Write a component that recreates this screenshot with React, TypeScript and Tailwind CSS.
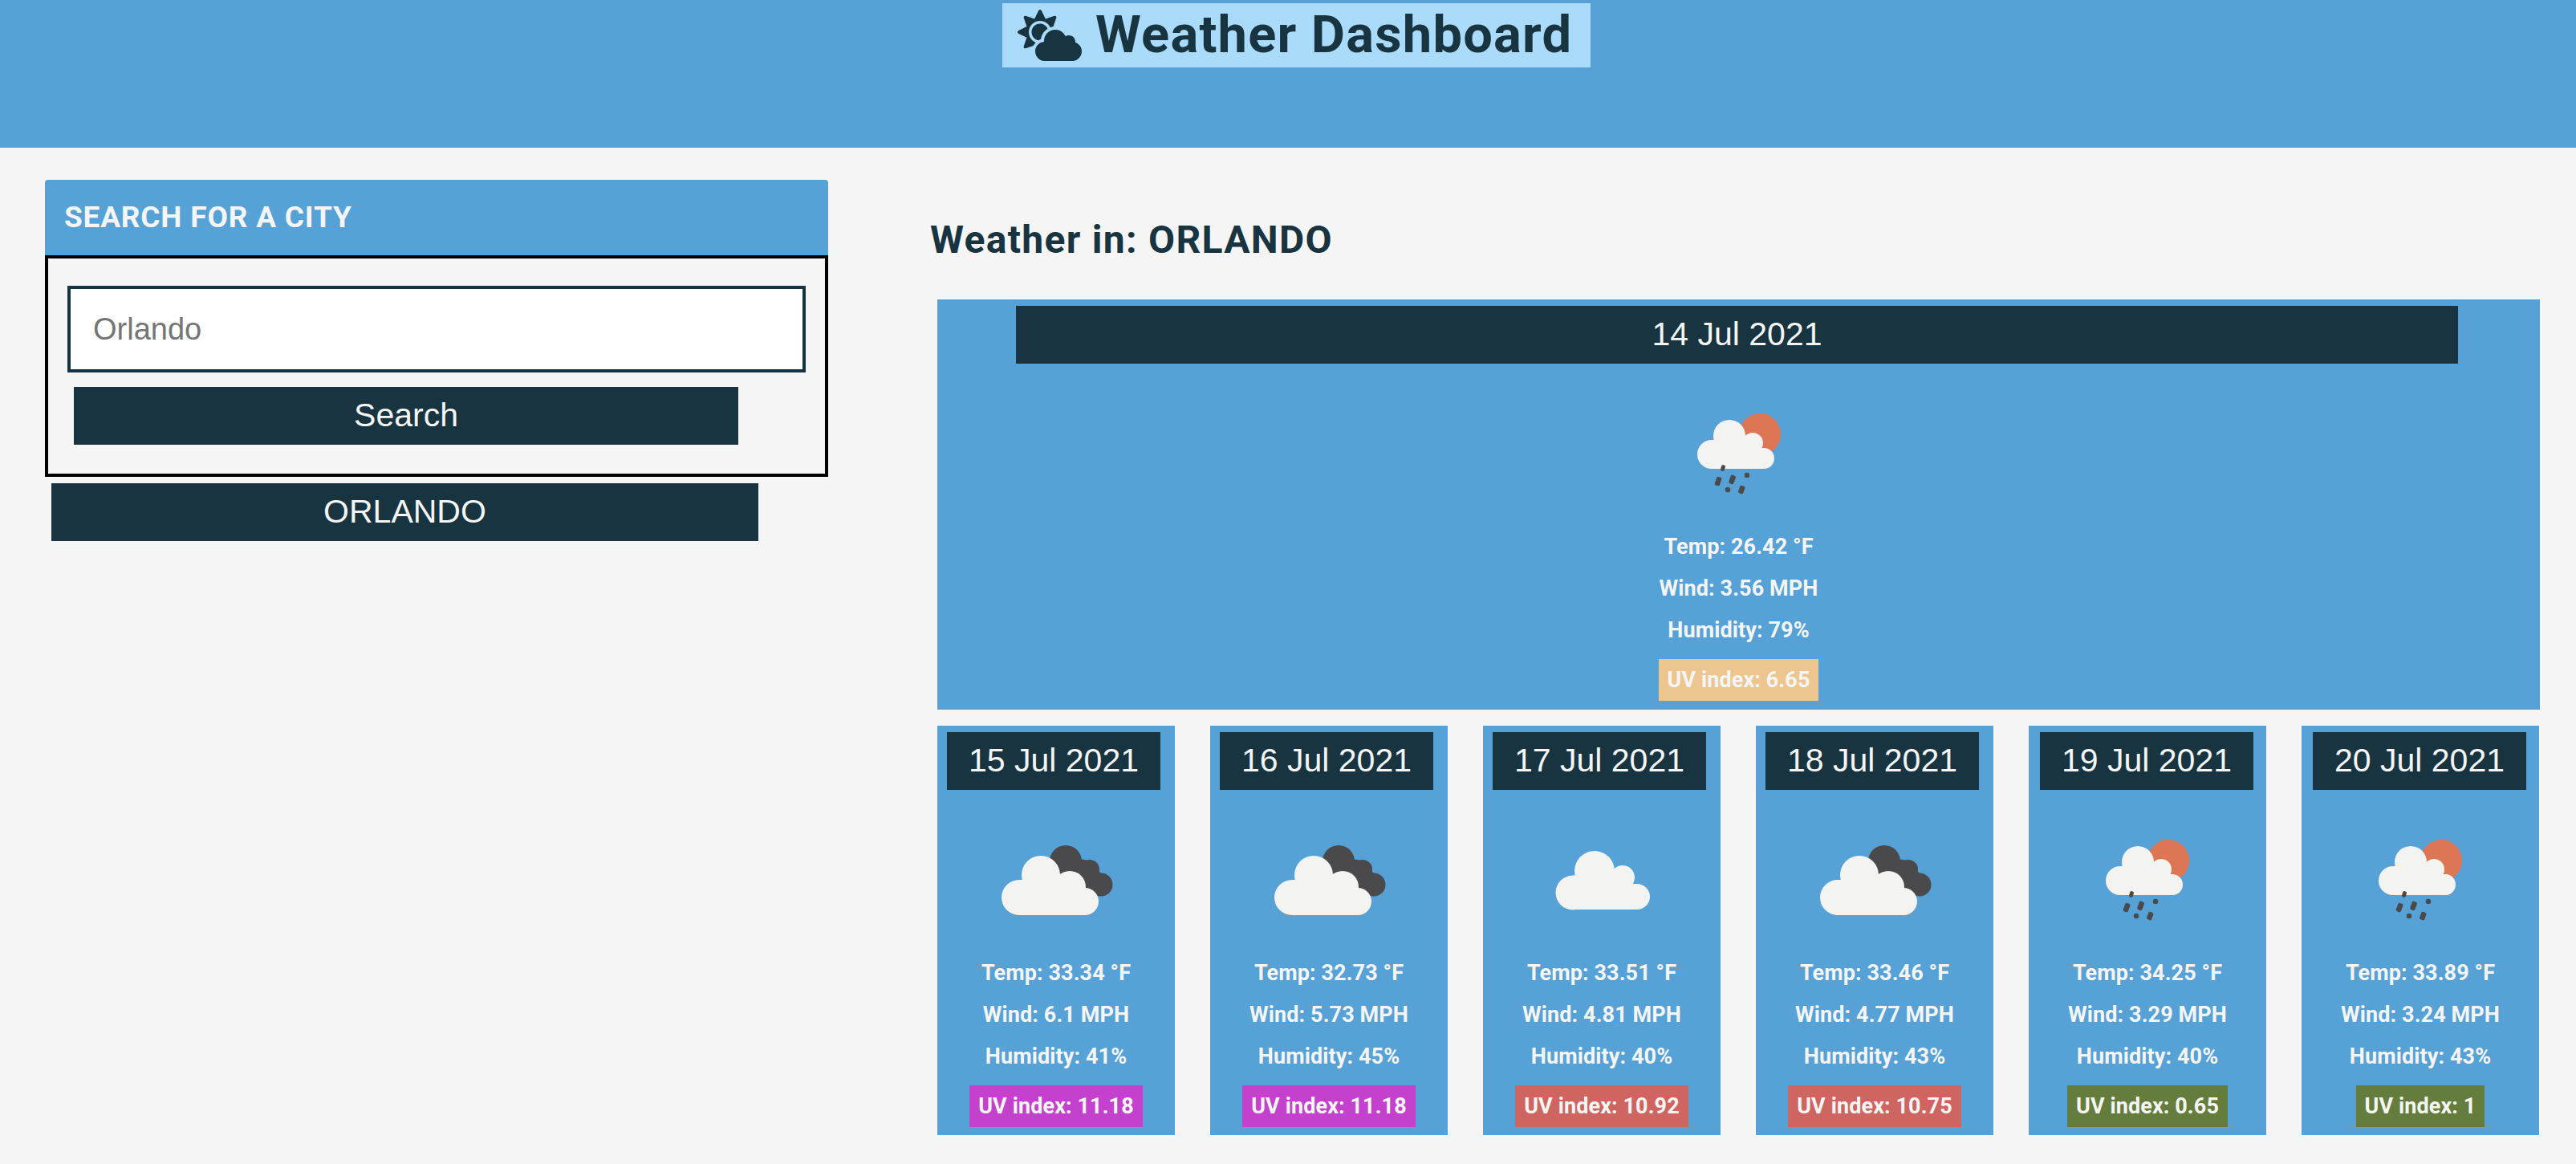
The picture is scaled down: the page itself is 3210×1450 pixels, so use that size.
import { FaCloudSun } from "react-icons/fa";

const sans = "font-['Roboto','Liberation_Sans',sans-serif]";

type Day = {
  date: string;
  temp: string;
  wind: string;
  humidity: string;
  uv: string;
  uvClass: string;
  icon: "rain" | "broken" | "cloud";
  dateClass: string;
};

const days: Day[] = [
  { date: "15 Jul 2021", temp: "33.34", wind: "6.1", humidity: "41", uv: "11.18", uvClass: "bg-[#c341cc]", icon: "broken", dateClass: "ml-[12px]" },
  { date: "16 Jul 2021", temp: "32.73", wind: "5.73", humidity: "45", uv: "11.18", uvClass: "bg-[#c341cc]", icon: "broken", dateClass: "ml-[12px]" },
  { date: "17 Jul 2021", temp: "33.51", wind: "4.81", humidity: "40", uv: "10.92", uvClass: "bg-[#cf6560]", icon: "cloud", dateClass: "ml-[12px]" },
  { date: "18 Jul 2021", temp: "33.46", wind: "4.77", humidity: "43", uv: "10.75", uvClass: "bg-[#cf6560]", icon: "broken", dateClass: "ml-[12px]" },
  { date: "19 Jul 2021", temp: "34.25", wind: "3.29", humidity: "40", uv: "0.65", uvClass: "bg-[#647d3d]", icon: "rain", dateClass: "ml-[14px]" },
  { date: "20 Jul 2021", temp: "33.89", wind: "3.24", humidity: "43", uv: "1", uvClass: "bg-[#647d3d]", icon: "rain", dateClass: "ml-[14px]" },
];

function WeatherIcon({ kind }: { kind: Day["icon"] }) {
  return (
    <svg width="200" height="190" viewBox="0 0 200 190" className="mx-auto mt-[12px] block">
      {kind === "broken" && (
        <g transform="translate(4 24)">
          <g fill="#4a4a4c">
            <circle cx="108" cy="53" r="20" />
            <circle cx="138" cy="63" r="12" />
            <circle cx="152" cy="82" r="14.5" />
            <path d="M92 45 L138 52 L152 68 L150 96 L110 96 Z" />
          </g>
          <g fill="#f3f3f1">
            <circle cx="50" cy="98" r="22" />
            <circle cx="77" cy="70" r="24" />
            <circle cx="113" cy="85" r="20" />
            <circle cx="132" cy="103" r="17" />
            <path d="M50 76 H77 V85 H132 V120 H50 Z" />
          </g>
        </g>
      )}
      {kind === "cloud" && (
        <g transform="translate(4 34)" fill="#f3f3f1">
          <circle cx="60" cy="82" r="21.5" />
          <circle cx="87" cy="55" r="25" />
          <circle cx="122" cy="63" r="15" />
          <circle cx="140" cy="87" r="16" />
          <path d="M60 60.5 H87 V63 H122 V71 H140 V103 H60 Z" />
        </g>
      )}
      {kind === "rain" && (
        <g transform="translate(24 24)">
          <circle cx="102" cy="52" r="26" fill="#dd7654" />
          <g fill="#f3f3f1">
            <circle cx="42" cy="77" r="18" />
            <circle cx="64" cy="54" r="20" />
            <circle cx="93" cy="63" r="13" />
            <circle cx="107" cy="82" r="13" />
            <path d="M42 59 H64 V63 H93 V69 H107 V95 H42 Z" />
          </g>
          <g fill="#4a4a4c">
            <rect x="53.5" y="90" width="5" height="8" rx="2.5" transform="rotate(15 56 94)" />
            <rect x="47" y="105" width="6.5" height="11" rx="2" transform="rotate(20 50 110)" />
            <rect x="64.5" y="103" width="6.5" height="11" rx="2" transform="rotate(20 68 108)" />
            <rect x="76" y="116" width="6.5" height="10" rx="2" transform="rotate(20 79 121)" />
            <circle cx="86" cy="103" r="3.2" />
            <circle cx="62" cy="121" r="3.2" />
          </g>
        </g>
      )}
    </svg>
  );
}

function Stats({ temp, wind, humidity, uv, uvClass }: Pick<Day, "temp" | "wind" | "humidity" | "uv" | "uvClass">) {
  return (
    <div className={`text-center text-[27px] leading-[52px] font-bold tracking-[0.1px] text-[#f5f5f5] ${sans}`}>
      <p>Temp: {temp} °F</p>
      <p>Wind: {wind} MPH</p>
      <p>Humidity: {humidity}%</p>
      <p className="mt-[10px] h-[52px]">
        <span className={`inline-block h-[52px] px-[11px] ${uvClass}`}>UV index: {uv}</span>
      </p>
    </div>
  );
}

export default function App() {
  return (
    <div className="min-h-[1450px] bg-[#f5f5f5] font-['Liberation_Sans',sans-serif]">
      <header className="h-[184px] bg-[#56a1d6] pt-[4px]">
        <h1 className={`ml-[1249px] flex h-[80px] w-[733px] items-center bg-[#abdbfa] pl-[19px] text-[65px] font-bold tracking-[1.2px] text-[#173440] ${sans}`}>
          <FaCloudSun className="mr-[17px] h-[64px] w-[80px]" />
          Weather Dashboard
        </h1>
      </header>
      <main className="flex items-start pt-[40px]">
        <section className="ml-[56px] w-[976px]">
          <h2 className={`flex h-[94px] items-center rounded-t-[4px] bg-[#56a1d6] pl-[24px] text-[37px] font-bold tracking-[0.8px] text-[#f5f5f5] ${sans}`}>
            SEARCH FOR A CITY
          </h2>
          <div className="border-4 border-black pt-[34px] pb-[36px]">
            <input
              readOnly
              value="Orlando"
              className="ml-[24px] block h-[108px] w-[920px] border-4 border-[#173440] bg-white pl-[28px] text-[38px] text-[#757575] outline-none"
            />
            <button type="button" className="mt-[18px] ml-[32px] block h-[72px] w-[828px] bg-[#173440] text-[41px] text-[#f5f5f5]">
              Search
            </button>
          </div>
          <button type="button" className="mt-[8px] ml-[8px] block h-[72px] w-[881px] bg-[#173440] text-[41px] text-[#f5f5f5]">
            ORLANDO
          </button>
        </section>
        <section className="ml-[127px] w-[2006px]">
          <h2 className={`flex h-[149px] items-center text-[48px] leading-none font-bold tracking-[1.3px] text-[#173440] ${sans}`}>
            Weather in: ORLANDO
          </h2>
          <div className="ml-[9px] w-[1997px]">
            <div className="h-[511px] bg-[#56a1d6] pt-[8px]">
              <div className="ml-[98px] flex h-[72px] w-[1797px] items-center justify-center bg-[#173440] text-[41px] text-[#f5f5f5]">
                14 Jul 2021
              </div>
              <WeatherIcon kind="rain" />
              <Stats temp="26.42" wind="3.56" humidity="79" uv="6.65" uvClass="bg-[#edc68f]" />
            </div>
            <div className="mt-[20px] flex gap-[44px]">
              {days.map((day) => (
                <div key={day.date} className="h-[510px] w-[296px] bg-[#56a1d6] pt-[8px]">
                  <div className={`flex h-[72px] w-[266px] items-center justify-center bg-[#173440] text-[41px] text-[#f5f5f5] ${day.dateClass}`}>
                    {day.date}
                  </div>
                  <WeatherIcon kind={day.icon} />
                  <Stats {...day} />
                </div>
              ))}
            </div>
          </div>
        </section>
      </main>
    </div>
  );
}
